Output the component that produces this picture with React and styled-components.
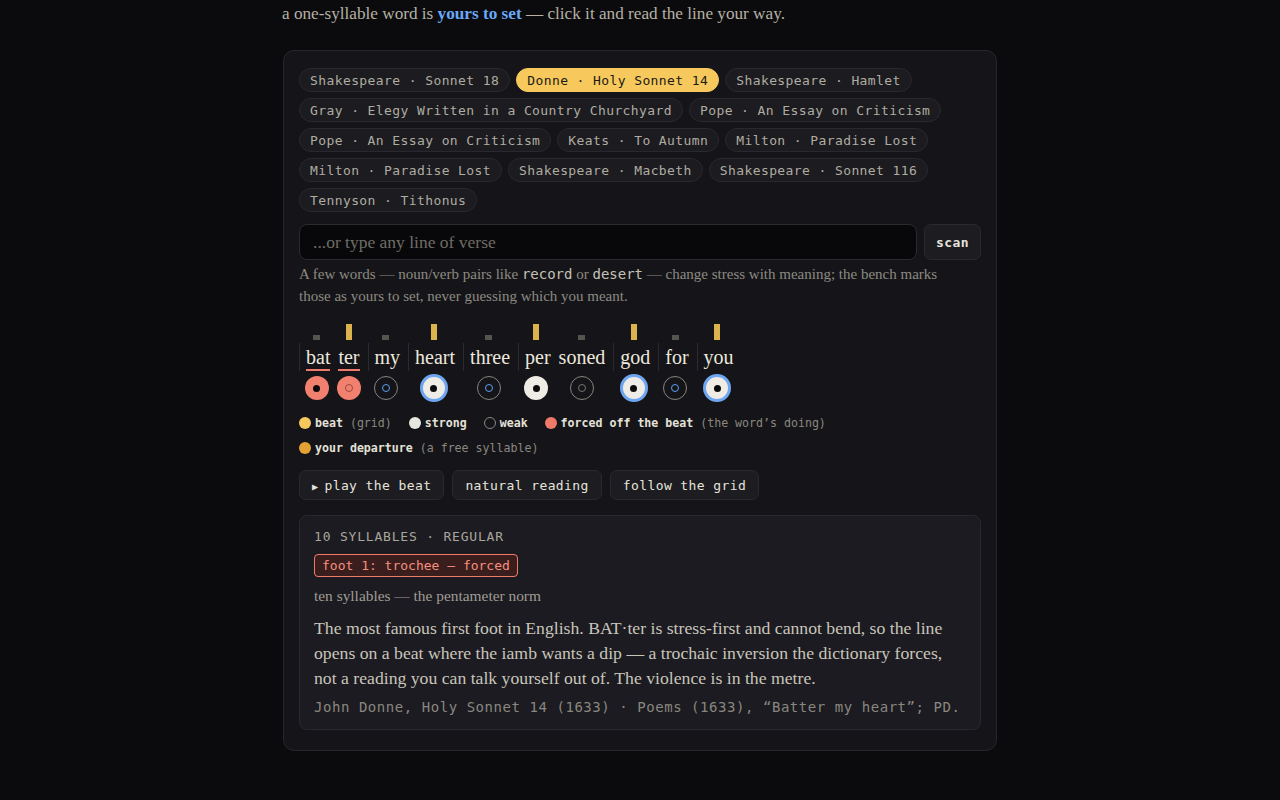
import { createGlobalStyle } from 'styled-components';
import styled from 'styled-components';

const serif = `"Liberation Serif", "Times New Roman", serif`
const mono = `"DejaVu Sans Mono", "Liberation Mono", monospace`

const GlobalStyle = createGlobalStyle`
  html, body {
    margin: 0;
    padding: 0;
    background: #0b0b0d;
  }
  body {
    font-family: ${serif};
    color: #c9c5ba;
  }
`

const Page = styled.div`
  width: 714px;
  margin: 0 auto;
  padding-bottom: 50px;
`

const Lede = styled.p`
  margin: 0 0 0 -1px;
  padding-top: 3px;
  height: 50px;
  box-sizing: border-box;
  font-size: 17.2px;
  line-height: 21px;
  color: #b5b1a6;
  b {
    color: #6aa8f8;
    font-weight: 700;
  }
`

const Card = styled.section`
  background: #151519;
  border: 1px solid #26262c;
  border-radius: 11px;
  padding: 17px 15px 20px;
`

const Chips = styled.div`
  display: flex;
  flex-wrap: wrap;
  gap: 6px;
`

const Chip = styled.button`
  height: 24px;
  padding: 0 10px;
  border-radius: 12px;
  border: 1px solid ${p => (p.$active ? '#f7c95c' : '#28282e')};
  background: ${p => (p.$active ? '#f7c95c' : '#1b1b20')};
  color: ${p => (p.$active ? '#1b1a17' : '#b0aca1')};
  font-family: ${mono};
  font-size: 13px;
  letter-spacing: 0.4px;
  cursor: pointer;
`

const InputRow = styled.div`
  display: flex;
  gap: 7px;
  margin-top: 12px;
`

const VerseInput = styled.input`
  flex: 1;
  height: 36px;
  box-sizing: border-box;
  background: #08080a;
  border: 1px solid #2a2a30;
  border-radius: 8px;
  padding: 0 13px;
  font-family: ${serif};
  font-size: 17.5px;
  color: #e0ddd2;
  outline: none;
  &::placeholder {
    color: #6f6d66;
  }
`

const SmallButton = styled.button`
  height: ${p => p.$h || 30}px;
  padding: 0 ${p => p.$pad || 12}px;
  background: #1c1c21;
  border: 1px solid #29292f;
  border-radius: 7px;
  color: #e6e4dc;
  font-family: ${mono};
  font-size: 13px;
  letter-spacing: 0.4px;
  font-weight: ${p => (p.$bold ? 600 : 400)};
  cursor: pointer;
`

const Help = styled.p`
  margin: 3px 0 0;
  max-width: 660px;
  font-size: 15px;
  line-height: 22px;
  color: #8d8a82;
  code {
    font-family: ${mono};
    font-size: 14px;
    line-height: 18px;
    color: #c6c2b7;
  }
`

const Line = styled.div`
  display: flex;
  align-items: flex-start;
  margin-top: 17px;
`

const Col = styled.div`
  display: flex;
  flex-direction: column;
  align-items: center;
  margin-left: ${p => (p.$first && !p.$start ? 4 : 0)}px;
`

const BarSlot = styled.div`
  height: 16px;
  display: flex;
  align-items: flex-end;
`

const Bar = styled.div`
  width: ${p => (p.$strong ? 6 : 7)}px;
  height: ${p => (p.$strong ? 16 : 5)}px;
  background: ${p => (p.$strong ? '#dcb24c' : '#55554e')};
`

const WordCell = styled.div`
  margin-top: 3px;
  height: 28px;
  box-sizing: border-box;
  padding: 0 4px 0 ${p => (p.$first ? 6 : 4)}px;
  border-left: ${p => (p.$first ? '1px solid #2a2a30' : '0')};
  display: flex;
  align-items: flex-end;
  align-self: stretch;
  justify-content: center;
`

const Syl = styled.span`
  display: block;
  font-size: 20px;
  line-height: 24px;
  color: #ece8de;
  border-bottom: 2px solid ${p => (p.$forced ? '#f07a6a' : 'transparent')};
`

const CircleSlot = styled.div`
  height: 28px;
  margin-top: 3px;
  display: flex;
  align-items: center;
  justify-content: center;
`

const circleBg = {
  forced: '#f2806f',
  strong: '#eeece4',
  yours: '#eeece4',
  weak: 'transparent',
}

const Circle = styled.div`
  box-sizing: border-box;
  width: ${p => (p.$kind === 'yours' ? 28 : 24)}px;
  height: ${p => (p.$kind === 'yours' ? 28 : 24)}px;
  border-radius: 50%;
  background: ${p => circleBg[p.$kind]};
  border: ${p =>
    p.$kind === 'yours' ? '3px solid #6ea6f2' : p.$kind === 'weak' ? '1.5px solid #86847d' : '0'};
  display: flex;
  align-items: center;
  justify-content: center;
`

const Dot = styled.div`
  box-sizing: border-box;
  width: ${p => (p.$ring ? 8 : 7)}px;
  height: ${p => (p.$ring ? 8 : 7)}px;
  border-radius: 50%;
  background: ${p => (p.$ring ? 'transparent' : '#0b0b0d')};
  border: ${p => (p.$ring ? `1.5px solid ${p.$ring}` : '0')};
`

const Legend = styled.div`
  display: flex;
  flex-wrap: wrap;
  column-gap: 17px;
  row-gap: 11px;
  margin-top: 14px;
  font-family: ${mono};
  font-size: 11.6px;
  line-height: 14px;
`

const LegendItem = styled.span`
  display: inline-flex;
  align-items: center;
  gap: 4px;
  color: #8a877f;
  b {
    color: #e4e1d8;
    font-weight: 600;
  }
`

const Swatch = styled.span`
  box-sizing: border-box;
  width: 12px;
  height: 12px;
  border-radius: 50%;
  background: ${p => p.$color || 'transparent'};
  border: ${p => (p.$color ? '0' : '1px solid #8a877f')};
`

const Controls = styled.div`
  display: flex;
  gap: 8px;
  margin-top: 15px;
`

const Play = styled.span`
  font-size: 10px;
  margin-right: 6px;
`

const Report = styled.div`
  margin-top: 15px;
  background: #1b1b21;
  border: 1px solid #28282e;
  border-radius: 8px;
  padding: 12px 14px 12px;
`

const Kicker = styled.div`
  font-family: ${mono};
  font-size: 13px;
  letter-spacing: 0.8px;
  line-height: 18px;
  color: #a9a69c;
`

const Tag = styled.span`
  display: inline-block;
  margin-top: 8px;
  height: 23px;
  box-sizing: border-box;
  padding: 0 7px;
  border: 1px solid #f07a6a;
  border-radius: 4px;
  background: #3a1e1d;
  color: #f4907f;
  font-family: ${mono};
  font-size: 13px;
  line-height: 21px;
`

const Note = styled.p`
  margin: 9px 0 0;
  font-size: 15.4px;
  line-height: 20px;
  color: #a09d94;
`

const Body = styled.p`
  margin: 10px 0 0;
  font-size: 17.7px;
  line-height: 25px;
  color: #c9c5ba;
`

const Cite = styled.div`
  margin-top: 6px;
  font-family: ${mono};
  font-size: 14px;
  letter-spacing: 0.55px;
  line-height: 20px;
  color: #8a877f;
`

const chips = [
  'Shakespeare · Sonnet 18',
  'Donne · Holy Sonnet 14',
  'Shakespeare · Hamlet',
  'Gray · Elegy Written in a Country Churchyard',
  'Pope · An Essay on Criticism',
  'Pope · An Essay on Criticism',
  'Keats · To Autumn',
  'Milton · Paradise Lost',
  'Milton · Paradise Lost',
  'Shakespeare · Macbeth',
  'Shakespeare · Sonnet 116',
  'Tennyson · Tithonus',
]

// beat: grid position strong/weak; kind: circle style
const syllables = [
  { t: 'bat', first: true, beat: false, kind: 'forced', forced: true },
  { t: 'ter', beat: true, kind: 'forced', forced: true, ring: '#9a4a40' },
  { t: 'my', first: true, beat: false, kind: 'weak', ring: '#5a9ef0' },
  { t: 'heart', first: true, beat: true, kind: 'yours' },
  { t: 'three', first: true, beat: false, kind: 'weak', ring: '#5a9ef0' },
  { t: 'per', first: true, beat: true, kind: 'strong' },
  { t: 'soned', beat: false, kind: 'weak', ring: '#76746d' },
  { t: 'god', first: true, beat: true, kind: 'yours' },
  { t: 'for', first: true, beat: false, kind: 'weak', ring: '#5a9ef0' },
  { t: 'you', first: true, beat: true, kind: 'yours' },
]

function App() {
  return (
    <>
      <GlobalStyle />
      <Page>
        <Lede>
          a one-syllable word is <b>yours to set</b> — click it and read the line your way.
        </Lede>
        <Card>
          <Chips>
            {chips.map((c, i) => (
              <Chip key={i} $active={i === 1}>{c}</Chip>
            ))}
          </Chips>

          <InputRow>
            <VerseInput placeholder="...or type any line of verse" />
            <SmallButton $h={36} $pad={11} $bold>scan</SmallButton>
          </InputRow>
          <Help>
            A few words — noun/verb pairs like <code>record</code> or <code>desert</code> — change
            stress with meaning; the bench marks those as yours to set, never guessing which you meant.
          </Help>

          <Line>
            {syllables.map((s, i) => (
              <Col key={i} $first={s.first} $start={i === 0}>
                <BarSlot>
                  <Bar $strong={s.beat} />
                </BarSlot>
                <WordCell $first={s.first}>
                  <Syl $forced={s.forced}>{s.t}</Syl>
                </WordCell>
                <CircleSlot>
                  <Circle $kind={s.kind}>
                    <Dot $ring={s.ring} />
                  </Circle>
                </CircleSlot>
              </Col>
            ))}
          </Line>

          <Legend>
            <LegendItem><Swatch $color="#f7c95c" /><span><b>beat</b> (grid)</span></LegendItem>
            <LegendItem><Swatch $color="#e8e6e0" /><span><b>strong</b></span></LegendItem>
            <LegendItem><Swatch /><span><b>weak</b></span></LegendItem>
            <LegendItem><Swatch $color="#f07a6a" /><span><b>forced off the beat</b> (the word’s doing)</span></LegendItem>
            <LegendItem><Swatch $color="#e2a334" /><span><b>your departure</b> (a free syllable)</span></LegendItem>
          </Legend>

          <Controls>
            <SmallButton><Play>▶</Play>play the beat</SmallButton>
            <SmallButton>natural reading</SmallButton>
            <SmallButton>follow the grid</SmallButton>
          </Controls>

          <Report>
            <Kicker>10 SYLLABLES · REGULAR</Kicker>
            <Tag>foot 1: trochee — forced</Tag>
            <Note>ten syllables — the pentameter norm</Note>
            <Body>
              The most famous first foot in English. BAT·ter is stress-first and cannot bend, so the line
              opens on a beat where the iamb wants a dip — a trochaic inversion the dictionary forces,
              not a reading you can talk yourself out of. The violence is in the metre.
            </Body>
            <Cite>John Donne, Holy Sonnet 14 (1633) · Poems (1633), “Batter my heart”; PD.</Cite>
          </Report>
        </Card>
      </Page>
    </>
  );
}

export default App;
